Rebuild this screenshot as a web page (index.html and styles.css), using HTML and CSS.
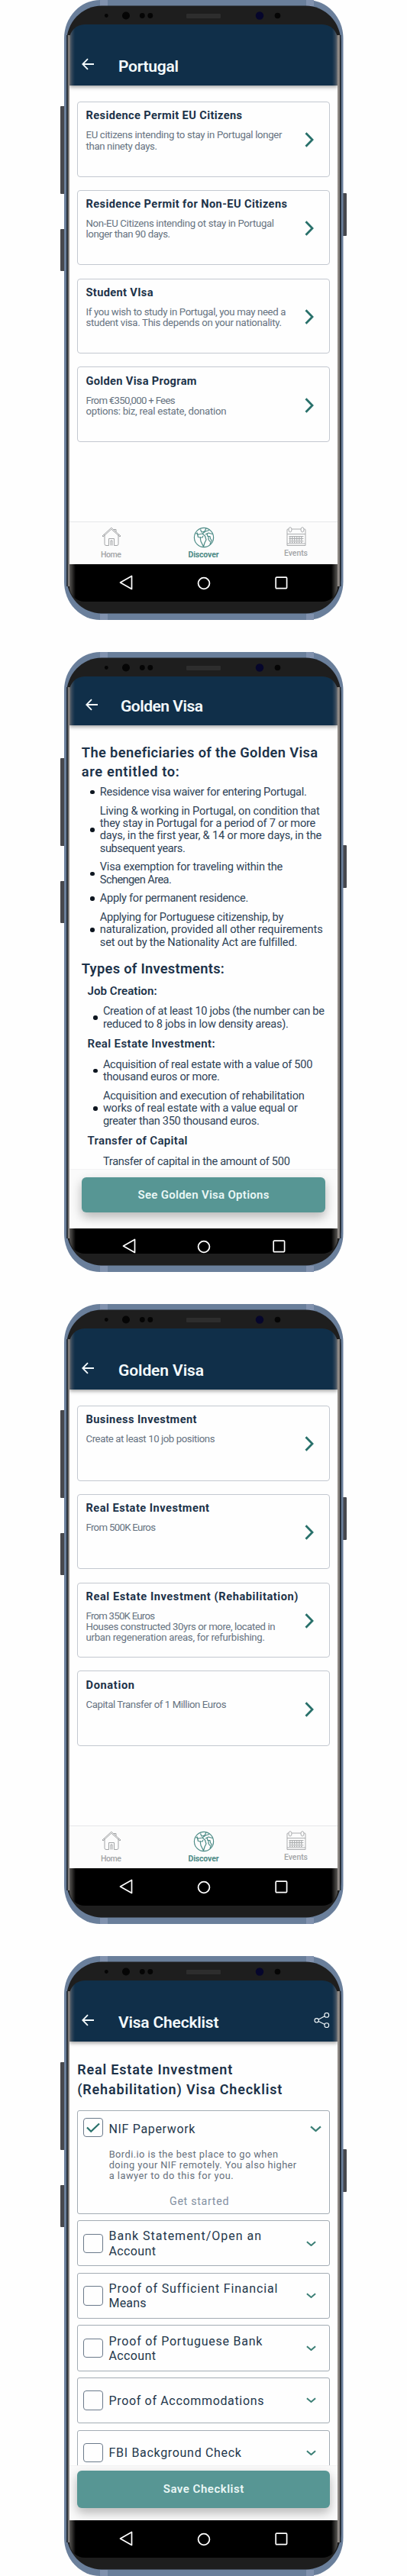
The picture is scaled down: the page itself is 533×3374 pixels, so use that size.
FILE: index.html
```html
<!DOCTYPE html>
<html lang="en">
<head>
<meta charset="utf-8">
<title>Bordi visa screens</title>
<link rel="stylesheet" href="styles.css">
</head>
<body>
<svg class="defs" aria-hidden="true">
  <defs>
    <linearGradient id="edge-l"><stop offset="0" stop-color="#1a2633"/><stop offset=".45" stop-color="#3d4045"/><stop offset=".6" stop-color="#8b8682"/><stop offset="1" stop-color="#99948f"/></linearGradient>
    <linearGradient id="edge-r"><stop offset="0" stop-color="#99948f"/><stop offset=".6" stop-color="#85807c"/><stop offset=".75" stop-color="#23262c"/><stop offset="1" stop-color="#1a2633"/></linearGradient>
  </defs>
  <symbol id="shell" viewBox="0 0 376 812">
    <rect x="0" y="139" width="6" height="115" rx="1" fill="#47484d"/>
    <rect x="0" y="300" width="6" height="55" rx="1" fill="#47484d"/>
    <rect x="369" y="253" width="6" height="56" rx="1" fill="#47484d"/>
    <rect x="5" y="0" width="365.5" height="812" rx="47" ry="50" fill="#6a7f9b"/>
    <path d="M52 0h10v8H52zM322 0h10v8h-10zM52 804h10v8H52zM322 804h10v8h-10z" fill="#8192ae"/>
    <rect x="8" y="7.5" width="359.5" height="796" rx="46" ry="48" fill="#1e1e1e"/>
    <rect x="8" y="46" width="4.5" height="722" fill="url(#edge-l)"/>
    <rect x="362.5" y="46" width="5" height="722" fill="url(#edge-r)"/>
    <circle cx="60.3" cy="20.5" r="2.4" fill="#050505"/>
    <circle cx="86" cy="20.5" r="5" fill="#050505"/>
    <circle cx="107.3" cy="20.5" r="3.4" fill="#050505"/>
    <circle cx="117.8" cy="20.5" r="3.4" fill="#050505"/>
    <rect x="165" y="18" width="45" height="6" rx="1" fill="#2d2d2d"/>
    <circle cx="261" cy="20.5" r="5.2" fill="#06062c"/>
    <circle cx="284.5" cy="20.5" r="3.8" fill="#050505"/>
  </symbol>
  <symbol id="back" viewBox="0 0 17 16"><path d="M16 8H1.5M8 1.2 1.3 8 8 14.8" fill="none" stroke="currentColor" stroke-width="1.8"/></symbol>
  <symbol id="next" viewBox="0 0 12 20"><path d="M1.5 1.2 10 10 1.5 18.8" fill="none" stroke="currentColor" stroke-width="2.8"/></symbol>
  <symbol id="down" viewBox="0 0 14 8"><path d="M1 1.2 7 6.5 13 1.2" fill="none" stroke="currentColor" stroke-width="2.1"/></symbol>
  <symbol id="share" viewBox="0 0 21 20"><g fill="none" stroke="currentColor" stroke-width="1.1"><circle cx="3.7" cy="10.3" r="2.7"/><circle cx="16.8" cy="3.4" r="2.9"/><circle cx="16.8" cy="16.7" r="2.9"/><path d="m6.2 9 8-4.2M6.2 11.6l8 3.8"/></g></symbol>
  <symbol id="home" viewBox="0 0 26 26"><g fill="none" stroke="currentColor" stroke-width="1"><path d="M1 12 12.800 1.200 25 12M4 10v12.500q0 2 2 2h3.500v-9h7v9H20q2 0 2-2V10M12 24.500v-6.500h2v6.500M15.500 3.500h3.500v3.200M1 12l1 1L12.800 3.200 24 13l1-1"/></g></symbol>
  <symbol id="globe" viewBox="0 0 28 28"><g fill="none" stroke="currentColor" stroke-width="1.2" stroke-linejoin="round"><circle cx="14" cy="14" r="12.6"/><path d="M3.500 8.500 7 10l5-1 3.500 3M5 7.500l1.500 6L12 14l1-2M9 13l1 6 3.500 7 1.500-5 2-4-1.500-5M9.500 3.500 11 7l4-1 2-4M12 9l4-3 5-1.500M16 10l4-2 5 1.500M18 8.500l1 4 3 0 .5 3 1.500 2-2 5.500M20 12.500v4l2 3"/></g></symbol>
  <symbol id="calendar" viewBox="0 0 26 26"><g fill="none" stroke="currentColor" stroke-width=".9"><path d="M3 3H2q-1 0-1 1v20.500h24V4q0-1-1-1h-1M7 3h12M1 9.500h24M1 22h24M3.500 12.500h19M3.500 15.500h19M3.500 18.800h19"/><ellipse cx="5" cy="3.800" rx="2" ry="3.200"/><ellipse cx="21" cy="3.800" rx="2" ry="3.200"/></g><g fill="none" stroke="currentColor" stroke-width="1.400" stroke-dasharray="1.500 1.500"><path d="M4 14h18M4 17h18M4 20.300h18"/></g></symbol>
  <symbol id="nav-back" viewBox="0 0 18 20"><path d="M16.500 1.500v17L1.500 10z" fill="none" stroke="currentColor" stroke-width="1.700" stroke-linejoin="round"/></symbol>
  <symbol id="nav-home" viewBox="0 0 18 18"><circle cx="9" cy="9" r="7.400" fill="none" stroke="currentColor" stroke-width="1.800"/></symbol>
  <symbol id="nav-recent" viewBox="0 0 17 17"><rect x="1.200" y="1.200" width="14.400" height="14.400" rx="1" fill="none" stroke="currentColor" stroke-width="1.700"/></symbol>
</svg>

<main class="board">

  <section class="phone">
    <svg class="shell"><use href="#shell"/></svg>
    <div class="screen">
      <header class="bar">
        <svg class="i-back"><use href="#back"/></svg>
        <h1 class="bar-title"><span data-w="79">Portugal</span></h1>
      </header>
      <div class="body cards">
        <article class="card"><div><h2><span data-w="204.5">Residence Permit EU Citizens</span></h2><p><span data-w="257">EU citizens intending to stay in Portugal longer</span><span data-w="93.5">than ninety days.</span></p></div><svg class="i-next"><use href="#next"/></svg></article>
        <article class="card"><div><h2><span data-w="263.5">Residence Permit for Non-EU Citizens</span></h2><p><span data-w="246.5">Non-EU Citizens intending ot stay in Portugal</span><span data-w="110.5">longer than 90 days.</span></p></div><svg class="i-next"><use href="#next"/></svg></article>
        <article class="card"><div><h2><span data-w="88">Student VIsa</span></h2><p><span data-w="262">If you wish to study in Portugal, you may need a</span><span data-w="256.5">student visa. This depends on your nationality.</span></p></div><svg class="i-next"><use href="#next"/></svg></article>
        <article class="card"><div><h2><span data-w="145">Golden Visa Program</span></h2><p><span data-w="117">From €350,000 + Fees</span><span data-w="184">options: biz, real estate, donation</span></p></div><svg class="i-next"><use href="#next"/></svg></article>
      </div>
      <nav class="tabs">
        <div class="tab"><svg class="i-tab"><use href="#home"/></svg><span data-w="27">Home</span></div>
        <div class="tab on"><svg class="i-tab"><use href="#globe"/></svg><span data-w="40">Discover</span></div>
        <div class="tab events"><svg class="i-tab"><use href="#calendar"/></svg><span data-w="31">Events</span></div>
      </nav>
      <div class="sysnav"><svg class="n-back"><use href="#nav-back"/></svg><svg class="n-home"><use href="#nav-home"/></svg><svg class="n-recent"><use href="#nav-recent"/></svg></div>
    </div>
  </section>

  <section class="phone short">
    <svg class="shell"><use href="#shell"/></svg>
    <div class="screen">
      <header class="bar">
        <svg class="i-back"><use href="#back"/></svg>
        <h1 class="bar-title"><span data-w="108">Golden Visa</span></h1>
      </header>
      <div class="body article">
        <h2><span data-w="309">The beneficiaries of the Golden Visa</span><span data-w="128">are entitled to:</span></h2>
        <ul>
          <li><span data-w="271">Residence visa waiver for entering Portugal.</span></li>
          <li><span data-w="288">Living &amp; working in Portugal, on condition that</span><span data-w="282.5">they stay in Portugal for a period of 7 or more</span><span data-w="290">days, in the first year, &amp; 14 or more days, in the</span><span data-w="112">subsequent years.</span></li>
          <li><span data-w="239.5">Visa exemption for traveling within the</span><span data-w="94">Schengen Area.</span></li>
          <li><span data-w="194.5">Apply for permanent residence.</span></li>
          <li><span data-w="240.5">Applying for Portuguese citizenship, by</span><span data-w="292">naturalization, provided all other requirements</span><span data-w="258">set out by the Nationality Act are fulfilled.</span></li>
        </ul>
        <h2 class="types"><span data-w="187">Types of Investments:</span></h2>
        <div class="kinds">
          <h3><span data-w="91">Job Creation:</span></h3>
          <ul><li><span data-w="290">Creation of at least 10 jobs (the number can be</span><span data-w="243">reduced to 8 jobs in low density areas).</span></li></ul>
          <h3><span data-w="167">Real Estate Investment:</span></h3>
          <ul>
            <li><span data-w="274.5">Acquisition of real estate with a value of 500</span><span data-w="153">thousand euros or more.</span></li>
            <li><span data-w="264">Acquisition and execution of rehabilitation</span><span data-w="255">works of real estate with a value equal or</span><span data-w="205">greater than 350 thousand euros.</span></li>
          </ul>
          <h3><span data-w="131">Transfer of Capital</span></h3>
          <p class="tail"><span data-w="245">Transfer of capital in the amount of 500</span></p>
        </div>
      </div>
      <footer class="cta"><button type="button"><span data-w="172">See Golden Visa Options</span></button></footer>
      <div class="sysnav"><svg class="n-back"><use href="#nav-back"/></svg><svg class="n-home"><use href="#nav-home"/></svg><svg class="n-recent"><use href="#nav-recent"/></svg></div>
    </div>
  </section>

  <section class="phone">
    <svg class="shell"><use href="#shell"/></svg>
    <div class="screen">
      <header class="bar">
        <svg class="i-back"><use href="#back"/></svg>
        <h1 class="bar-title"><span data-w="112">Golden Visa</span></h1>
      </header>
      <div class="body cards">
        <article class="card"><div><h2><span data-w="145">Business Investment</span></h2><p><span data-w="169">Create at least 10 job positions</span></p></div><svg class="i-next"><use href="#next"/></svg></article>
        <article class="card"><div><h2><span data-w="161.5">Real Estate Investment</span></h2><p><span data-w="91.5">From 500K Euros</span></p></div><svg class="i-next"><use href="#next"/></svg></article>
        <article class="card"><div><h2><span data-w="278">Real Estate Investment (Rehabilitation)</span></h2><p><span data-w="90.5">From 350K Euros</span><span data-w="248">Houses constructed 30yrs or more, located in</span><span data-w="234.5">urban regeneration areas, for refurbishing.</span></p></div><svg class="i-next"><use href="#next"/></svg></article>
        <article class="card"><div><h2><span data-w="63.5">Donation</span></h2><p><span data-w="184">Capital Transfer of 1 Million Euros</span></p></div><svg class="i-next"><use href="#next"/></svg></article>
      </div>
      <nav class="tabs">
        <div class="tab"><svg class="i-tab"><use href="#home"/></svg><span data-w="27">Home</span></div>
        <div class="tab on"><svg class="i-tab"><use href="#globe"/></svg><span data-w="40">Discover</span></div>
        <div class="tab events"><svg class="i-tab"><use href="#calendar"/></svg><span data-w="31">Events</span></div>
      </nav>
      <div class="sysnav"><svg class="n-back"><use href="#nav-back"/></svg><svg class="n-home"><use href="#nav-home"/></svg><svg class="n-recent"><use href="#nav-recent"/></svg></div>
    </div>
  </section>

  <section class="phone">
    <svg class="shell"><use href="#shell"/></svg>
    <div class="screen">
      <header class="bar">
        <svg class="i-back"><use href="#back"/></svg>
        <h1 class="bar-title"><span data-w="131.5">Visa Checklist</span></h1>
        <svg class="i-share"><use href="#share"/></svg>
      </header>
      <div class="body checklist">
        <h2><span data-w="203">Real Estate Investment</span><span data-w="268">(Rehabilitation) Visa Checklist</span></h2>
        <div class="panel open">
          <div class="row"><span class="box"><svg class="tick" viewBox="0 0 18 14"><path d="M1 6.500 6.200 11.800 17 1.500" fill="none" stroke="currentColor" stroke-width="2.200"/></svg></span><h3><span data-w="113">NIF Paperwork</span></h3><svg class="i-down"><use href="#down"/></svg></div>
          <p><span data-w="221.5">Bordi.io is the best place to go when</span><span data-w="245.5">doing your NIF remotely. You also higher</span><span data-w="163">a lawyer to do this for you.</span></p>
          <a class="start"><span data-w="77.5">Get started</span></a>
        </div>
        <div class="panel row"><span class="box"></span><h3><span data-w="199.5">Bank Statement/Open an</span><span data-w="61.5">Account</span></h3><svg class="i-down"><use href="#down"/></svg></div>
        <div class="panel row"><span class="box"></span><h3><span data-w="219.5">Proof of Sufficient Financial</span><span data-w="49">Means</span></h3><svg class="i-down"><use href="#down"/></svg></div>
        <div class="panel row"><span class="box"></span><h3><span data-w="201">Proof of Portuguese Bank</span><span data-w="61.5">Account</span></h3><svg class="i-down"><use href="#down"/></svg></div>
        <div class="panel row"><span class="box"></span><h3><span data-w="203">Proof of Accommodations</span></h3><svg class="i-down"><use href="#down"/></svg></div>
        <div class="panel row"><span class="box"></span><h3><span data-w="173.5">FBI Background Check</span></h3><svg class="i-down"><use href="#down"/></svg></div>
      </div>
      <footer class="cta wide"><button type="button"><span data-w="105.5">Save Checklist</span></button></footer>
      <div class="sysnav"><svg class="n-back"><use href="#nav-back"/></svg><svg class="n-home"><use href="#nav-home"/></svg><svg class="n-recent"><use href="#nav-recent"/></svg></div>
    </div>
  </section>

</main>
<script src="fit.js"></script>
</body>
</html>
```

FILE: styles.css
```css
* { box-sizing: border-box; }
body { margin: 0; background: #fefefe; font-family: Roboto, "Noto Sans", sans-serif; color: #1c3249; }
h1, h2, h3, p, ul { margin: 0; padding: 0; font-weight: 400; }
svg { display: block; flex: none; }
.defs { position: absolute; width: 0; height: 0; }

/* every text line is its own block so line breaks stay fixed */
[data-w] { display: block; width: max-content; white-space: nowrap; }

.board { display: flex; flex-direction: column; gap: 42px; padding-left: 84px; }
.phone { position: relative; width: 365.5px; height: 812px; padding: 32px 7.5px 0 7px; }
.shell { position: absolute; left: -5px; top: 0; width: 376px; height: 812px; }
.screen { position: relative; display: flex; flex-direction: column; height: 755.5px; overflow: hidden; border-radius: 20px; }

/* app bar */
.bar { position: relative; z-index: 1; display: flex; align-items: center; height: 80px; flex: none; padding: 24px 10px 0 16px; color: #f4fafc; background: linear-gradient(90deg, #6d7075, #33475a 3px, #102f49 7px calc(100% - 7px), #33475a calc(100% - 3px), #6d7075); box-shadow: 0 2px 5px rgba(0, 0, 0, .38); }
.bar-title { margin: 5px 0 0 31px; font-size: 21px; line-height: 24px; font-weight: 600; }
.i-back { width: 17px; height: 16px; }
.i-share { width: 21px; height: 20px; margin-left: auto; }
.short .bar { height: 63.5px; padding: 10px 10px 0 21px; }
.short .bar-title { margin: 4px 0 0 29px; }
.body { flex: 1; min-height: 0; overflow: hidden; background: #fefefe; }

/* destination cards */
.cards { display: flex; flex-direction: column; gap: 17.3px; padding: 21px 9.7px 0 10px; }
.card { display: flex; align-items: center; justify-content: space-between; flex: none; height: 98.5px; padding: 0 20px 0 10.5px; border: 1.5px solid #c3c8d0; border-radius: 4px; }
.card > div { align-self: flex-start; padding-top: 8.3px; }
.card h2 { font-size: 14.6px; line-height: 18px; font-weight: 700; }
.card p { margin-top: 10px; font-size: 13.2px; line-height: 14.2px; color: #667381; }
.i-next { width: 12px; height: 20px; margin-top: 2px; color: #28706a; }

/* tab bar */
.tabs { display: flex; justify-content: center; gap: 61px; flex: none; height: 56px; padding-top: 5.5px; border-top: 1px solid #e6e7e9; background: #fcfcfc; color: #a3a5a7; }
.tab { display: flex; flex-direction: column; align-items: center; width: 60px; font-size: 10.5px; line-height: 14px; font-weight: 500; }
.tab.on { color: #4c8b86; font-weight: 700; }
.i-tab { width: 26px; height: 26px; margin-bottom: 4.5px; }
.tab.on .i-tab { width: 28px; height: 28px; margin-bottom: 2.5px; }
.events .i-tab { margin-bottom: 2.5px; }

/* system navigation */
.sysnav { display: flex; align-items: flex-start; justify-content: center; gap: 84px; flex: none; height: 48.5px; padding-top: 13.5px; color: #fff; background: linear-gradient(90deg, #5a5855, #000 8px calc(100% - 8px), #5a5855); }
.n-back { width: 18px; height: 20px; }
.n-home { width: 18px; height: 18px; margin-top: 2px; }
.n-recent { width: 17px; height: 17px; margin-top: 2px; }
.short .sysnav { height: 32.8px; gap: 80.5px; }

/* article */
.article { padding: 23.2px 0 0 15.8px; }
.article h2 { font-size: 18.3px; line-height: 25px; font-weight: 600; }
.article ul { list-style: none; display: flex; flex-direction: column; gap: 8.2px; margin-top: 6.4px; font-size: 14.6px; line-height: 16.4px; color: #2f4357; }
.article li { position: relative; padding-left: 24px; }
.article li::before { content: ""; position: absolute; left: 11.5px; top: calc(50% - 2.3px); width: 5.4px; height: 5.4px; border-radius: 50%; background: #0e1620; }
.article .types { margin-top: 13.8px; }
.kinds { padding-left: 7.7px; }
.kinds h3 { margin-top: 9.2px; font-size: 15px; line-height: 18px; font-weight: 600; }
.kinds h3:first-child { margin-top: 7.6px; }
.kinds ul { margin-top: 9.6px; }
.kinds li { padding-left: 20.4px; }
.kinds li::before { left: 8px; }
.tail { margin-top: 9.6px; padding-left: 20.4px; font-size: 14.6px; line-height: 16.4px; color: #2f4357; }

/* bottom action */
.cta { flex: none; height: 78px; padding: 10px 16px 0; border-top: 1px solid #f3f3f4; background: #fafafa; }
.cta button { display: flex; align-items: center; justify-content: center; width: 100%; height: 46.5px; padding: 0; border: 0; border-radius: 6px; background: #579694; color: #eaf7f6; font: 600 15px/18px Roboto, "Noto Sans", sans-serif; box-shadow: 0 6px 14px rgba(0, 0, 0, .28); }
.cta.wide { height: 72.3px; padding: 6.6px 10px 0; }
.cta.wide button { height: 48.4px; }

/* checklist */
.checklist { display: flex; flex-direction: column; gap: 8.4px; padding: 23.7px 10px 0 10.3px; }
.checklist h2 { margin-bottom: 6px; font-size: 18px; line-height: 26.2px; font-weight: 600; }
.panel { flex: none; height: 60.2px; padding: 0 17.5px 0 6.7px; border: 1.2px solid #a3acb4; border-radius: 3px; }
.row { display: flex; align-items: center; }
.box { display: grid; place-items: center; flex: none; width: 26px; height: 25.5px; margin-right: 7.5px; border: 1.3px solid #6b7a8b; border-radius: 4px; color: #28706a; }
.tick { width: 18px; height: 14px; }
.panel h3 { padding-top: 1px; font-size: 16px; line-height: 19.4px; color: #24384c; }
.i-down { width: 13px; height: 7.5px; margin-left: auto; color: #3c7f76; }
.panel.open { height: 135.4px; padding: 8.5px 10.5px 0 6.7px; }
.open .i-down { width: 15px; height: 8.6px; margin-top: 4px; }
.open h3 { margin-top: 3px; }
.panel.open p { margin: 15.5px 0 0 33.7px; font-size: 12.8px; line-height: 14.2px; color: #66707c; }
.start { display: flex; justify-content: center; margin: 16px 8px 0 0; font-size: 14.3px; line-height: 18px; color: #8491a2; }
```

FILE: fit.js
```js
// Tracks each line so it fills the measure given in data-w.
document.querySelectorAll('[data-w]').forEach((line) => {
  const natural = line.getBoundingClientRect().width;
  const slack = parseFloat(line.dataset.w) - natural;
  const step = slack / (line.textContent.length - 1);
  line.style.letterSpacing = step + 'px';
  line.style.marginRight = -step + 'px';
});
```
